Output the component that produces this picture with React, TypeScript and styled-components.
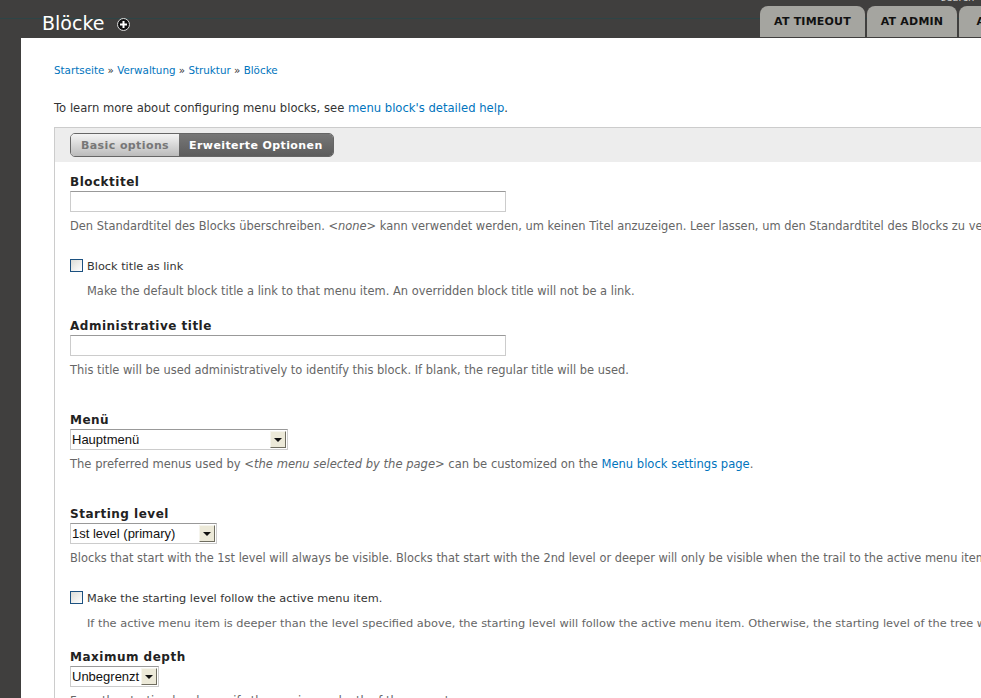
import styled, { createGlobalStyle } from "styled-components";

const GlobalStyle = createGlobalStyle`
    html, body {
        margin: 0;
        padding: 0;
        height: 698px;
        overflow: hidden;
        background: #403f3e;
    }
    body {
        font-family: "DejaVu Sans", Verdana, sans-serif;
        font-size: 11px;
        color: #494949;
    }
`;

const Page = styled.div`
    width: 981px;
    height: 698px;
    overflow: hidden;
`;

const Header = styled.header`
    position: relative;
    height: 38px;
    display: flex;
    justify-content: space-between;
    background: linear-gradient(#403f3e 18px, #2d4547 18px, #2d4547 19px, #403f3e 19px);
`;

const TitleRow = styled.div`
    display: flex;
    align-items: center;
    gap: 13px;
    padding: 8px 0 0 42px;
    height: 31px;
`;

const PageTitle = styled.h1`
    margin: 0;
    font-size: 19px;
    font-weight: normal;
    color: #fff;
    line-height: 31px;
`;

const AddIcon = styled.svg`
    width: 13px;
    height: 13px;
    margin-top: 2px;
`;

const SearchHint = styled.span`
    position: absolute;
    top: -8px;
    left: 941px;
    font-size: 10px;
    color: #ccc;
`;

const Tabs = styled.nav`
    display: flex;
    gap: 2px;
    padding: 6px 0 0;
    width: 221px;
    overflow: hidden;
`;

const Tab = styled.a`
    flex: none;
    width: ${(p: { $width: number }) => p.$width}px;
    height: 31px;
    box-sizing: border-box;
    border-radius: 8px 8px 0 0;
    background: #a5a5a0;
    color: #111;
    font-size: 11px;
    font-weight: bold;
    line-height: 32px;
    letter-spacing: 0.2px;
    text-align: center;
`;

const Content = styled.main`
    margin-left: 21px;
    height: 660px;
    background: #fff;
    padding: 26px 0 0 33px;
    overflow: hidden;
`;

const Breadcrumb = styled.div`
    font-size: 10.35px;
    line-height: 13px;
    color: #333;
`;

const Link = styled.a`
    color: #0074bd;
`;

const Intro = styled.p`
    margin: 24px 0 0;
    font-size: 11.6px;
    line-height: 14px;
    color: #333;
    white-space: nowrap;
`;

const Panel = styled.section`
    margin-top: 12px;
    width: 1100px;
    border: 1px solid #ccc;
    box-sizing: border-box;
    height: 600px;
`;

const ToolBar = styled.div`
    background: #ededed;
    height: 34px;
    padding: 5px 0 0 15px;
    box-sizing: border-box;
`;

const Toggle = styled.div`
    display: inline-flex;
    height: 24px;
    box-sizing: border-box;
    border: 1px solid #666;
    border-radius: 5px;
    overflow: hidden;
    font-size: 11px;
    font-weight: bold;
    letter-spacing: 0.4px;
    line-height: 24px;
`;

const ToggleOption = styled.span<{ $active?: boolean }>`
    padding: 0 10px;
    color: ${(p) => (p.$active ? "#fff" : "#777")};
    background: ${(p) => (p.$active ? "linear-gradient(#777, #5c5c5c)" : "linear-gradient(#f4f4f4, #bbb)")};
`;

const Form = styled.div`
    padding-left: 15px;
    white-space: nowrap;
`;

const Field = styled.div<{ $top: number }>`
    margin-top: ${(p) => p.$top}px;
`;

const Label = styled.label`
    display: block;
    font-size: 12px;
    font-weight: bold;
    letter-spacing: 0.5px;
    line-height: 14px;
    margin-bottom: 2px;
    color: #222;
`;

const TextInput = styled.div`
    width: 436px;
    height: 21px;
    box-sizing: border-box;
    border: 1px solid #ccc;
    border-top-color: #999;
    background: #fff;
`;

const Description = styled.div<{ $indent?: boolean; $size?: number }>`
    margin-top: ${(p) => (p.$indent ? 10 : 7)}px;
    margin-left: ${(p) => (p.$indent ? 17 : 0)}px;
    font-size: ${(p) => p.$size ?? 11.45}px;
    line-height: 14px;
    color: #666;
`;

const CheckRow = styled.div`
    display: flex;
    align-items: flex-start;
    gap: 4px;
    font-size: 11.3px;
    line-height: 14px;
    color: #333;
`;

const CheckText = styled.span`
    padding-top: 1px;
`;

const Check = styled.span`
    width: 13px;
    height: 13px;
    box-sizing: border-box;
    border: 1px solid #1c5180;
    background: linear-gradient(135deg, #dcdcd6, #fff);
`;

const Select = styled.div<{ $width: number }>`
    width: ${(p) => p.$width}px;
    height: 21px;
    box-sizing: border-box;
    border: 1px solid #ccc;
    border-top-color: #999;
    display: flex;
    align-items: center;
    justify-content: space-between;
    padding: 0 1px 0 1px;
    font-family: "Liberation Sans", Arial, sans-serif;
    font-size: 13px;
    color: #111;
`;

const SelectArrow = styled.span`
    width: 16px;
    height: 17px;
    box-sizing: border-box;
    background: #ece9d8;
    border: 1px solid;
    border-color: #f6f5ee #6f6d60 #6f6d60 #f6f5ee;
    display: flex;
    align-items: center;
    justify-content: center;
    &::after {
        content: "";
        border: 4px solid transparent;
        border-top: 4px solid #111;
        border-bottom: 0;
    }
`;

export default function App() {
    return (
        <Page>
            <GlobalStyle />
            <Header>
                <TitleRow>
                    <PageTitle>Blöcke</PageTitle>
                    <AddIcon viewBox="0 0 13 13">
                        <circle cx="6.5" cy="6.5" r="6" fill="#111" stroke="#ddd" strokeWidth="1" />
                        <path d="M6.5 3v7M3 6.5h7" stroke="#fff" strokeWidth="2" />
                    </AddIcon>
                </TitleRow>
                <SearchHint>search</SearchHint>
                <Tabs>
                    <Tab $width={105}>AT TIMEOUT</Tab>
                    <Tab $width={90}>AT ADMIN</Tab>
                    <Tab $width={90}>AT SHOP</Tab>
                </Tabs>
            </Header>
            <Content>
                <Breadcrumb>
                    <Link>Startseite</Link> » <Link>Verwaltung</Link> » <Link>Struktur</Link> » <Link>Blöcke</Link>
                </Breadcrumb>
                <Intro>
                    To learn more about configuring menu blocks, see <Link>menu block's detailed help</Link>.
                </Intro>
                <Panel>
                    <ToolBar>
                        <Toggle>
                            <ToggleOption>Basic options</ToggleOption>
                            <ToggleOption $active>Erweiterte Optionen</ToggleOption>
                        </Toggle>
                    </ToolBar>
                    <Form>
                        <Field $top={13}>
                            <Label>Blocktitel</Label>
                            <TextInput />
                            <Description>
                                Den Standardtitel des Blocks überschreiben. <em>&lt;none&gt;</em> kann verwendet werden, um keinen Titel anzuzeigen. Leer lassen, um den Standardtitel des Blocks zu verwenden.
                            </Description>
                        </Field>
                        <Field $top={26}>
                            <CheckRow>
                                <Check />
                                <CheckText>Block title as link</CheckText>
                            </CheckRow>
                            <Description $indent>
                                Make the default block title a link to that menu item. An overridden block title will not be a link.
                            </Description>
                        </Field>
                        <Field $top={21}>
                            <Label>Administrative title</Label>
                            <TextInput />
                            <Description>
                                This title will be used administratively to identify this block. If blank, the regular title will be used.
                            </Description>
                        </Field>
                        <Field $top={36}>
                            <Label>Menü</Label>
                            <Select $width={218}>
                                Hauptmenü
                                <SelectArrow />
                            </Select>
                            <Description $size={11.55}>
                                The preferred menus used by <em>&lt;the menu selected by the page&gt;</em> can be customized on the <Link>Menu block settings page</Link>.
                            </Description>
                        </Field>
                        <Field $top={36}>
                            <Label>Starting level</Label>
                            <Select $width={147}>
                                1st level (primary)
                                <SelectArrow />
                            </Select>
                            <Description $size={11.4}>
                                Blocks that start with the 1st level will always be visible. Blocks that start with the 2nd level or deeper will only be visible when the trail to the active menu item is in the 2nd level.
                            </Description>
                        </Field>
                        <Field $top={26}>
                            <CheckRow>
                                <Check />
                                <CheckText>Make the starting level follow the active menu item.</CheckText>
                            </CheckRow>
                            <Description $indent $size={11.37}>
                                If the active menu item is deeper than the level specified above, the starting level will follow the active menu item. Otherwise, the starting level of the tree will remain fixed.
                            </Description>
                        </Field>
                        <Field $top={20}>
                            <Label>Maximum depth</Label>
                            <Select $width={89}>
                                Unbegrenzt
                                <SelectArrow />
                            </Select>
                            <Description>
                                From the starting level, specify the maximum depth of the menu tree.
                            </Description>
                        </Field>
                    </Form>
                </Panel>
            </Content>
        </Page>
    );
}
